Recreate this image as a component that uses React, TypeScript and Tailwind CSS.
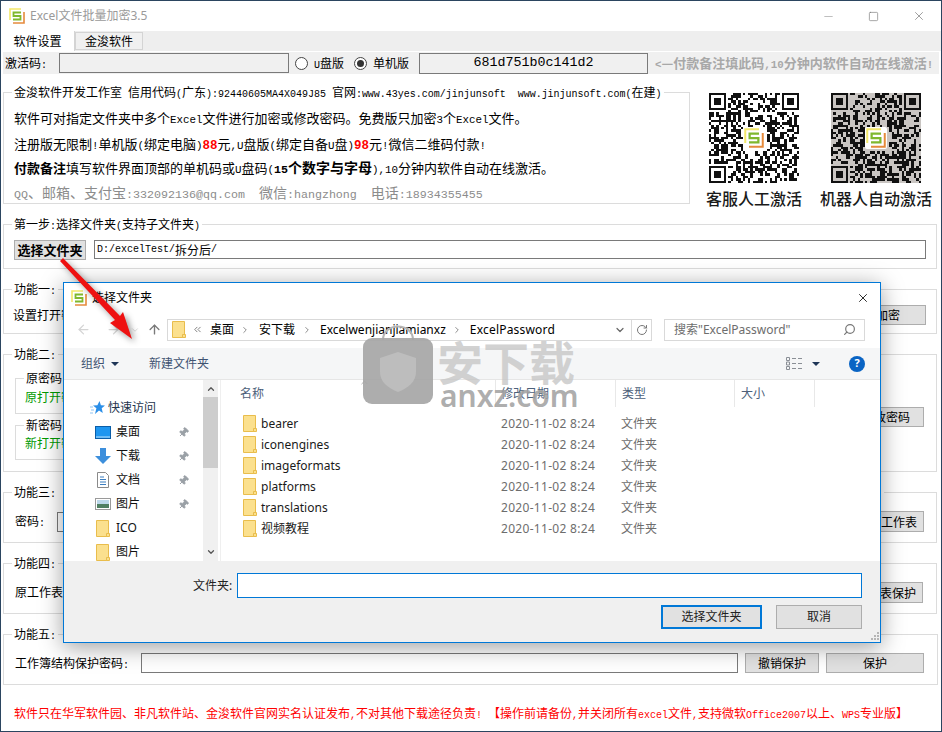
import type { ReactNode } from 'react'
import { ArrowLeft, ArrowRight, ArrowUp, ChevronDown, ChevronRight, ChevronUp, ChevronsLeft, Pin, RotateCw, Search, X, Minus, Square } from 'lucide-react'

// half width latin next to the CJK glyphs, the way SimSun sets them
function Sim({ text }: { text: string }) {
  const parts = text.split(/([\x20-\x7e]+)/).filter(Boolean)
  return (
    <>
      {parts.map((p, i) =>
        /^[\x20-\x7e]+$/.test(p) ? (
          <span key={i} className="whitespace-pre font-['Liberation_Mono',monospace] text-[0.8333em]">{p}</span>
        ) : (
          <span key={i}>{p}</span>
        )
      )}
    </>
  )
}

function Logo({ size = 16 }: { size?: number }) {
  return (
    <svg width={size} height={size} viewBox="0 0 16 16" fill="none" aria-hidden="true">
      <path d="M1 12V1h11" stroke="#f3e86a" strokeWidth="1.6" />
      <path d="M15 4v11H4" stroke="#e58a3c" strokeWidth="1.6" />
      <path d="M12 4.5H4.5V8h7v3.5H4" stroke="#7fb82e" strokeWidth="1.8" />
    </svg>
  )
}

function qrPath(seed: number) {
  const n = 37
  let s = seed
  const rnd = () => {
    s = (s * 1664525 + 1013904223) % 4294967296
    return (s >>> 12) % 1000 / 1000
  }
  const inFinder = (x: number, y: number) => (x < 8 && y < 8) || (x > n - 9 && y < 8) || (x < 8 && y > n - 9)
  const inLogo = (x: number, y: number) => x > 13 && x < 24 && y > 13 && y < 24
  let d = ''
  for (let y = 0; y < n; y++) {
    for (let x = 0; x < n; x++) {
      if (!inFinder(x, y) && !inLogo(x, y) && rnd() > 0.5) d += `M${x} ${y}h1v1h-1z`
    }
  }
  for (const [fx, fy] of [[0, 0], [n - 7, 0], [0, n - 7]]) {
    d += `M${fx} ${fy}h7v7h-7zM${fx + 1} ${fy + 1}v5h5v-5zM${fx + 2} ${fy + 2}h3v3h-3z`
  }
  return d
}

function Qr({ seed, bg, caption }: { seed: number; bg: string; caption: string }) {
  return (
    <div className="flex w-[90px] flex-col items-center">
      <div className="relative h-[90px] w-[90px]">
        <svg width="90" height="90" viewBox="0 0 37 37" aria-hidden="true">
          <rect width="37" height="37" fill={bg} />
          <path d={qrPath(seed)} fill="#111" fillRule="evenodd" shapeRendering="crispEdges" />
        </svg>
        <div className="absolute left-[34px] top-[34px] flex h-[22px] w-[22px] items-center justify-center rounded-[2px] bg-white">
          <Logo size={20} />
        </div>
      </div>
      <div className="mt-[5px] whitespace-nowrap text-[16px] font-medium leading-[20px] text-[#1a1a1a]">{caption}</div>
    </div>
  )
}

function Group({ title, className, children }: { title: ReactNode; className: string; children: ReactNode }) {
  return (
    <fieldset className={`border border-[#dcdcdc] ${className}`}>
      <legend className="ml-[8px] h-[16px] px-[2px] text-[12px] leading-[16px] text-black">
        {typeof title === 'string' ? <Sim text={title} /> : title}
      </legend>
      {children}
    </fieldset>
  )
}

function Btn({ label, className }: { label: string; className: string }) {
  return (
    <div className={`flex h-[20px] shrink-0 items-center justify-center border border-[#adadad] bg-[#e1e1e1] text-[12px] text-black ${className}`}>
      {label}
    </div>
  )
}

function Radio({ on }: { on?: boolean }) {
  return (
    <span className="flex h-[13px] w-[13px] items-center justify-center rounded-full border border-[#444] bg-white">
      {on && <span className="h-[7px] w-[7px] rounded-full bg-[#333]" />}
    </span>
  )
}

function Folder() {
  return (
    <svg width="14" height="17" viewBox="0 0 14 17" aria-hidden="true" className="shrink-0">
      <path d="M.5.5h12v16H.5z" fill="#fbe08e" stroke="#e9bd4c" />
      <path d="M10.5 13.5h3v3h-3z" fill="#fbe08e" stroke="#e9bd4c" />
    </svg>
  )
}

function Star() {
  return (
    <svg width="15" height="14" viewBox="0 0 15 14" aria-hidden="true">
      <path d="M9.5 0l1.4 4.3 4.1.2-3.3 2.8 1.1 4.7L9 9.4 5 13l1.4-5.7L3 4.5l4.4-.2z" fill="#2b8fe8" />
      <path d="M0 6h3M1 9h3M0 12h3" stroke="#8fc4f2" strokeWidth="1" />
    </svg>
  )
}

function DesktopIcon() {
  return (
    <svg width="16" height="13" viewBox="0 0 16 13" aria-hidden="true">
      <rect x=".5" y=".5" width="15" height="12" fill="#1e96f0" stroke="#0b5ea8" />
      <path d="M1 11h14" stroke="#bfe3fb" />
    </svg>
  )
}

function DownloadIcon() {
  return (
    <svg width="16" height="16" viewBox="0 0 16 16" aria-hidden="true">
      <path d="M5 0h6v8h5l-8 8-8-8h5z" fill="#3d8fdc" />
    </svg>
  )
}

function DocIcon() {
  return (
    <svg width="12" height="16" viewBox="0 0 12 16" aria-hidden="true">
      <path d="M.5.5h8l3 3v12H.5z" fill="#fff" stroke="#8a8a8a" />
      <path d="M3 5h4M3 7.5h6M3 10h6M3 12.5h6" stroke="#3d7fc0" />
    </svg>
  )
}

function PictureIcon() {
  return (
    <svg width="16" height="12" viewBox="0 0 16 12" aria-hidden="true">
      <rect x=".5" y=".5" width="15" height="11" fill="#fff" stroke="#9a9a9a" />
      <rect x="2" y="2" width="12" height="4" fill="#bcd8ea" />
      <rect x="2" y="6" width="12" height="4" fill="#4f7f62" />
    </svg>
  )
}

function ViewIcon() {
  return (
    <svg width="16" height="13" viewBox="0 0 16 13" fill="none" aria-hidden="true">
      <path d="M.5.5h3v3h-3zM.5 5h3v3h-3zM.5 9.5h3v3h-3z" stroke="#8a8f96" />
      <path d="M6 1.5h4M12 1.5h4M6 6.5h4M12 6.5h4M6 11.5h4M12 11.5h4" stroke="#8a8f96" />
    </svg>
  )
}

const navItems = [
  { label: '桌面', icon: <DesktopIcon />, pin: true },
  { label: '下载', icon: <DownloadIcon />, pin: true },
  { label: '文档', icon: <DocIcon />, pin: true },
  { label: '图片', icon: <PictureIcon />, pin: true },
  { label: 'ICO', icon: <Folder />, pin: false },
  { label: '图片', icon: <Folder />, pin: false },
]

const files = ['bearer', 'iconengines', 'imageformats', 'platforms', 'translations', '视频教程']

function FolderDialog() {
  return (
    <div className="absolute left-[62px] top-[281px] flex h-[361px] w-[818px] flex-col border border-[#0078d7] bg-white font-['Noto_Sans','Noto_Sans_CJK_SC',sans-serif] shadow-[0_4px_22px_rgba(0,0,0,0.38)]">
      {/* title */}
      <div className="flex h-[30px] shrink-0 items-center pl-[7px] pr-[10px]">
        <Logo size={16} />
        <span className="ml-[5px] text-[12px] text-black">选择文件夹</span>
        <X className="ml-auto text-black" size={14} strokeWidth={1.4} />
      </div>

      {/* address row */}
      <div className="flex h-[35px] shrink-0 items-center pb-[2px] pl-[12px]">
        <ArrowLeft size={15} className="text-[#d4d4d4]" strokeWidth={2} />
        <ArrowRight size={15} className="ml-[15px] text-[#d4d4d4]" strokeWidth={2} />
        <ChevronDown size={10} className="ml-[9px] text-[#d4d4d4]" strokeWidth={2} />
        <ArrowUp size={15} className="ml-[7px] text-[#7a7a7a]" strokeWidth={2.2} />
        <div className="ml-[5px] flex h-[22px] w-[485px] items-center border border-[#d9d9d9] pl-[4px] text-[12px] text-black">
          <Folder />
          <ChevronsLeft size={11} className="ml-[6px] text-[#777]" />
          <span className="ml-[7px]">桌面</span>
          <ChevronRight size={10} className="ml-[6px] text-[#777]" />
          <span className="ml-[9px]">安下载</span>
          <ChevronRight size={10} className="ml-[7px] text-[#777]" />
          <span className="ml-[8px]">Excelwenjianjiamianxz</span>
          <ChevronRight size={10} className="ml-[6px] text-[#777]" />
          <span className="ml-[8px] tracking-[0.2px]">ExcelPassword</span>
          <ChevronDown size={12} className="ml-auto mr-[5px] text-[#666]" strokeWidth={2.4} />
          <div className="flex h-full w-[20px] items-center justify-center border-l border-[#d9d9d9]">
            <RotateCw size={12} className="text-[#777]" strokeWidth={2} />
          </div>
        </div>
        <div className="ml-[12px] flex h-[22px] w-[201px] items-center border border-[#d9d9d9] pl-[9px] pr-[8px] text-[12px] text-[#6d6d6d]">
          <span>搜索"ExcelPassword"</span>
          <Search size={13} className="ml-auto -scale-x-100 text-[#777]" strokeWidth={2.2} />
        </div>
      </div>

      {/* toolbar */}
      <div className="relative flex h-[32px] shrink-0 items-center border-b border-[#e6e6e6] bg-[#f5f6f7] pl-[17px] text-[12px] text-[#3f5372]">
        <span>组织</span>
        <span className="ml-[6px] h-0 w-0 border-x-[4px] border-t-[4px] border-x-transparent border-t-[#1e3557]" />
        <span className="ml-[30px]">新建文件夹</span>
        <span className="ml-auto"><ViewIcon /></span>
        <span className="ml-[10px] h-0 w-0 border-x-[4px] border-t-[4px] border-x-transparent border-t-[#1e3557]" />
        <span className="ml-[29px] mr-[15px] flex h-[16px] w-[16px] items-center justify-center rounded-full bg-[#0a64c4] text-[11px] font-bold text-white">?</span>
      </div>

      {/* lists */}
      <div className="flex h-[181px] shrink-0">
        <div className="w-[139px] shrink-0 pt-[16px] text-[12px] text-black">
          <div className="flex h-[24px] items-center pl-[26px] text-[#24344d]">
            <Star />
            <span className="ml-[3px]">快速访问</span>
          </div>
          {navItems.map((item, i) => (
            <div key={i} className="flex h-[24px] items-center text-[#111]">
              <span className="ml-[31px] flex w-[16px] justify-center">{item.icon}</span>
              <span className="ml-[5px]">{item.label}</span>
              {item.pin && <Pin size={11} className="ml-auto mr-[14px] rotate-45 fill-[#9aa0a6] text-[#9aa0a6]" />}
            </div>
          ))}
        </div>
        <div className="relative flex w-[15px] shrink-0 flex-col items-center justify-between bg-[#f0f0f0] py-[4px]">
          <ChevronUp size={10} className="text-[#555]" strokeWidth={3} />
          <div className="absolute left-0 top-[17px] h-[71px] w-[15px] bg-[#cdcdcd]" />
          <ChevronDown size={10} className="text-[#555]" strokeWidth={3} />
        </div>
        <div className="ml-[2px] flex-1 border-l border-[#efefef]">
          <div className="relative flex h-[27px] text-[12px] text-[#4c607a]">
            <ChevronUp size={11} className="absolute left-[138px] top-[-3px] text-[#a8a8a8]" />
            <span className="flex w-[275px] items-center border-r border-[#e8e8e8] pl-[19px]">名称</span>
            <span className="flex w-[120px] items-center border-r border-[#e8e8e8] pl-[5px]">修改日期</span>
            <span className="flex w-[119px] items-center border-r border-[#e8e8e8] pl-[6px]">类型</span>
            <span className="flex w-[80px] items-center border-r border-[#e8e8e8] pl-[6px]">大小</span>
          </div>
          <div className="pt-[6px]">
            {files.map((f) => (
              <div key={f} className="flex h-[21px] items-center text-[12px] text-[#6d6d6d]">
                <span className="ml-[22px] w-[18px]"><Folder /></span>
                <span className="w-[240px] text-[#1a1a1a]">{f}</span>
                <span className="w-[120px] tracking-[0.3px]">2020-11-02 8:24</span>
                <span>文件夹</span>
              </div>
            ))}
          </div>
        </div>
      </div>

      {/* footer */}
      <div className="relative flex-1 bg-[#f0f0f0]">
        <div className="flex items-center pl-[129px] pt-[12px] text-[12px] text-[#222]">
          <span className="w-[44px]">文件夹:</span>
          <div className="h-[25px] w-[625px] border border-[#0078d7] bg-white" />
        </div>
        <div className="mt-[7px] flex justify-end gap-[14px] pr-[18px] text-[12px] text-[#222]">
          <div className="flex h-[24px] w-[101px] items-center justify-center border-2 border-[#0078d7] bg-[#e1e1e1]">选择文件夹</div>
          <div className="flex h-[24px] w-[86px] items-center justify-center border border-[#adadad] bg-[#e1e1e1]">取消</div>
        </div>
        <svg width="9" height="9" viewBox="0 0 9 9" className="absolute bottom-[1px] right-[1px]" aria-hidden="true">
          <path d="M7 0h2v2H7zM4 3h2v2H4zM7 3h2v2H7zM1 6h2v2H1zM4 6h2v2H4zM7 6h2v2H7z" fill="#b5b5b5" />
        </svg>
      </div>
    </div>
  )
}

function Watermark() {
  return (
    <div className="pointer-events-none absolute left-[362px] top-[324px] h-[85px] w-[215px]">
      <svg width="70" height="79" viewBox="0 0 70 79" className="absolute left-0 top-0" aria-hidden="true">
        <path d="M20 15c0-18 30-18 30 0" fill="none" stroke="#b5b5b5" strokeWidth="2" />
        <rect y="13" width="70" height="66" rx="9" fill="#a6a6a6" fillOpacity="0.92" />
        <path d="M35 27l18 6v14c0 10-8 16-18 20-10-4-18-10-18-20V33z" fill="#bdbdbd" />
      </svg>
      <div className="absolute left-[74px] top-[9px] whitespace-nowrap font-['Noto_Sans_CJK_SC',sans-serif] text-[46px] font-bold leading-[52px] text-[#c4c4c4]/75">安下载</div>
      <div className="absolute left-[77px] top-[56px] whitespace-nowrap font-['Noto_Sans',sans-serif] text-[30px] font-semibold leading-[30px] text-[#a3a3a3]/90">anxz.com</div>
    </div>
  )
}

export default function App() {
  return (
    <div className="relative h-[732px] w-[942px] overflow-hidden border border-[#2b4560] bg-white font-['Noto_Sans_CJK_SC','Liberation_Mono',sans-serif] text-black">
      {/* title bar */}
      <div className="flex h-[30px] items-center pl-[8px]">
        <Logo size={16} />
        <span className="ml-[5px] font-['Noto_Sans','Noto_Sans_CJK_SC',sans-serif] text-[12px] text-[#9a9a9a]">Excel文件批量加密3.5</span>
        <Minus size={13} className="ml-auto text-[#888]" strokeWidth={1} />
        <Square size={11} className="ml-[33px] text-[#777]" strokeWidth={1.4} />
        <X size={14} className="ml-[33px] mr-[15px] text-[#777]" strokeWidth={1.2} />
      </div>

      {/* tabs */}
      <div className="flex h-[20px] items-end bg-[#eeeeee] text-[12px]">
        <div className="flex h-[20px] w-[74px] items-center justify-center border-r border-[#d4d4d4] bg-white">软件设置</div>
        <div className="mb-[1px] flex h-[18px] w-[68px] items-center justify-center border border-[#d4d4d4] bg-[#f0f0f0]">金浚软件</div>
      </div>

      {/* activation */}
      <div className="mx-[2px] mt-[1px] flex h-[22px] items-center bg-[#f0f0f0] pl-[2px] text-[12px]">
        <span className="w-[54px]"><Sim text="激活码:" /></span>
        <div className="h-[20px] w-[230px] border border-[#7a7a7a] bg-[#f0f0f0]" />
        <span className="ml-[6px]"><Radio /></span>
        <span className="ml-[6px] w-[40px]"><Sim text="U盘版" /></span>
        <Radio on />
        <span className="ml-[6px] w-[46px]">单机版</span>
        <div className="flex h-[21px] w-[229px] items-center justify-center border border-[#7a7a7a] bg-[#f0f0f0] text-[16px] leading-none"><Sim text="681d751b0c141d2" /></div>
        <span className="ml-[7px] whitespace-nowrap text-[13px] font-bold text-[#a8a8a8]"><Sim text="<—付款备注填此码,10分钟内软件自动在线激活!" /></span>
      </div>

      <div className="ml-[2px] mt-[10px] flex w-[934px] flex-col gap-[12px]">
        {/* about + qr */}
        <div className="flex h-[120px]">
          <Group
            className="h-[120px] w-[687px]"
            title="金浚软件开发工作室 信用代码(广东):92440605MA4X049J85 官网:www.43yes.com/jinjunsoft  www.jinjunsoft.com(在建)"
          >
            <div className="pl-[10px] pt-[5px] text-[13px] leading-[25px]">
              <div className="h-[25px]"><Sim text="软件可对指定文件夹中多个Excel文件进行加密或修改密码。免费版只加密3个Excel文件。" /></div>
              <div className="h-[25px]">
                <Sim text="注册版无限制!单机版(绑定电脑)" />
                <b className="text-[15px] text-[#ff0000]"><Sim text="88" /></b>
                <Sim text="元,U盘版(绑定自备U盘)" />
                <b className="text-[15px] text-[#ff0000]"><Sim text="98" /></b>
                <Sim text="元!微信二维码付款!" />
              </div>
              <div className="h-[25px]">
                <b>付款备注</b>
                <Sim text="填写软件界面顶部的单机码或U盘码(" />
                <b className="text-[14px]"><Sim text="15个数字与字母" /></b>
                <Sim text="),10分钟内软件自动在线激活。" />
              </div>
              <div className="h-[25px] text-[14px] text-[#8c8c8c]"><Sim text="QQ、邮箱、支付宝:332092136@qq.com  微信:hangzhong  电话:18934355455" /></div>
            </div>
          </Group>
          <div className="ml-[19px] mt-[9px] flex gap-[32px]">
            <Qr seed={17} bg="#ffffff" caption="客服人工激活" />
            <Qr seed={923} bg="#c9c5c2" caption="机器人自动激活" />
          </div>
        </div>

        <Group className="h-[53px]" title="第一步:选择文件夹(支持子文件夹)">
          <div className="flex items-start pl-[10px] pr-[10px] pt-[8px]">
            <Btn label="选择文件夹" className="w-[72px] text-[13px] font-bold" />
            <div className="ml-[8px] flex h-[19px] flex-1 items-center border border-[#7a7a7a] pl-[2px] text-[12px]"><Sim text="D:/excelTest/拆分后/" /></div>
          </div>
        </Group>

        <Group className="h-[53px]" title="功能一:">
          <div className="flex items-center pl-[9px] pr-[10px] pt-[8px] text-[12px]">
            <span><Sim text="设置打开密码:" /></span>
            <Btn label="批量加密" className="ml-auto w-[100px] justify-end pr-[25px]" />
          </div>
        </Group>

        <Group className="h-[126px]" title="功能二:">
          <div className="flex pl-[11px] pr-[12px] pt-[8px]">
            <div className="flex w-[780px] flex-col gap-[3px]">
              <Group className="h-[44px]" title="原密码">
                <div className="pl-[9px] pt-[1px] text-[12px] leading-[20px] text-[#009a00]"><Sim text="原打开密码:" /></div>
              </Group>
              <Group className="h-[43px]" title="新密码">
                <div className="pl-[9px] text-[12px] leading-[20px] text-[#009a00]"><Sim text="新打开密码:" /></div>
              </Group>
            </div>
            <Btn label="修改密码" className="ml-auto mt-[37px] w-[100px] justify-end pr-[13px]" />
          </div>
        </Group>

        <Group
          className="h-[59px]"
          title={<span className="flex w-[868px] justify-between"><span><Sim text="功能三:" /></span><span><Sim text=")" /></span></span>}
        >
          <div className="flex items-center pl-[11px] pr-[12px] pt-[11px] text-[12px]">
            <span className="w-[42px]"><Sim text="密码:" /></span>
            <div className="h-[20px] w-[300px] border border-[#7a7a7a]" />
            <Btn label="保护工作表" className="ml-auto h-[21px] w-[100px] justify-end pr-[6px]" />
          </div>
        </Group>

        <Group className="h-[59px]" title="功能四:">
          <div className="flex items-center pl-[11px] pr-[13px] pt-[11px] text-[12px]">
            <span><Sim text="原工作表名:" /></span>
            <Btn label="撤销工作表保护" className="ml-auto h-[21px] w-[100px] justify-end pr-[6px]" />
          </div>
        </Group>

        <Group className="h-[59px]" title="功能五:">
          <div className="flex items-center pl-[11px] pr-[13px] pt-[11px] text-[12px]">
            <span className="w-[126px]"><Sim text="工作簿结构保护密码:" /></span>
            <div className="h-[20px] w-[597px] border border-[#7a7a7a]" />
            <Btn label="撤销保护" className="ml-[7px] w-[74px]" />
            <Btn label="保护" className="ml-[7px] w-[98px]" />
          </div>
        </Group>
      </div>

      <div className="ml-[13px] mt-[20px] h-[16px] whitespace-nowrap text-[12px] leading-[16px] text-[#ff0000]">
        <Sim text="软件只在华军软件园、非凡软件站、金浚软件官网实名认证发布,不对其他下载途径负责! 【操作前请备份,并关闭所有excel文件,支持微软Office2007以上、WPS专业版】" />
      </div>

      <FolderDialog />
      <Watermark />

      {/* red pointer arrow drawn on the screenshot */}
      <svg width="942" height="732" className="pointer-events-none absolute left-[-1px] top-[-1px] drop-shadow-[3px_3px_3px_rgba(0,0,0,0.4)]" aria-hidden="true">
        <polygon points="60,261 63,258 120,316 123,312 132,339 110,323 115,320" fill="#ee1111" />
      </svg>
    </div>
  )
}
